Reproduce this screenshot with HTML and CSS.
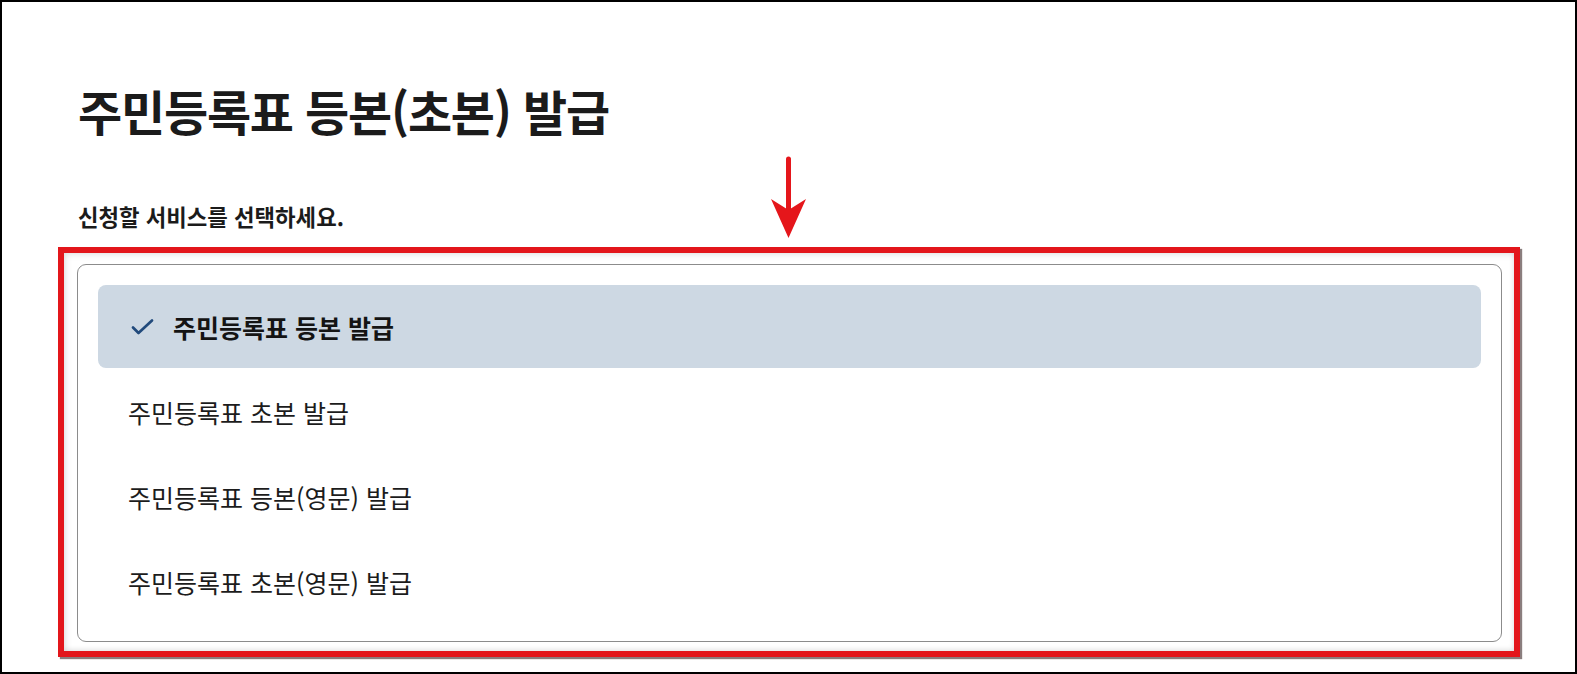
FILE: index.html
```html
<!DOCTYPE html>
<html lang="ko">
<head>
<meta charset="utf-8">
<title>주민등록표 등본(초본) 발급</title>
<link rel="stylesheet" href="styles.css">
</head>
<body>
<div class="frame">
  <h1 class="title">주민등록표 등본(초본) 발급</h1>
  <p class="subtitle">신청할 서비스를 선택하세요.</p>
  <div class="highlight">
    <ul class="card">
      <li class="item item-selected">
        <svg class="check" width="26" height="20" viewBox="0 0 26 20" aria-hidden="true">
          <path d="M5 10.5 L10.5 16 L24 3.5" fill="none" stroke="#214a7c" stroke-width="2.7" stroke-linecap="round" stroke-linejoin="round"/>
        </svg>
        <span>주민등록표 등본 발급</span>
      </li>
      <li class="item">주민등록표 초본 발급</li>
      <li class="item">주민등록표 등본(영문) 발급</li>
      <li class="item">주민등록표 초본(영문) 발급</li>
    </ul>
  </div>
  <svg class="arrow" width="46" height="92" viewBox="0 0 46 92" aria-hidden="true">
    <line x1="22.5" y1="9" x2="22.5" y2="60" stroke="#e5161b" stroke-width="5" stroke-linecap="round"/>
    <polygon points="5,49 22.5,60 40,49 22.5,88" fill="#e5161b"/>
  </svg>
</div>
</body>
</html>
```

FILE: styles.css
```css
* {
  box-sizing: border-box;
}

html, body {
  margin: 0;
  padding: 0;
  background: #ffffff;
}

.frame {
  position: relative;
  width: 1577px;
  height: 674px;
  border: 2px solid #000000;
  padding: 78px 55px 0 56px;
  overflow: hidden;
  font-family: "Noto Sans CJK KR", "Noto Sans", sans-serif;
  color: #1d1d1d;
}

.title {
  margin: 0;
  padding-left: 20px;
  font-size: 48px;
  line-height: 60px;
  font-weight: 700;
  letter-spacing: -1.2px;
  color: #1b1b1b;
}

.subtitle {
  margin: 61px 0 0;
  padding-left: 20px;
  font-size: 22.3px;
  line-height: 30px;
  font-weight: 700;
  color: #1b1b1b;
}

.highlight {
  margin-top: 16px;
  width: 1462px;
  border: 6px solid #e3161b;
  padding: 11px 12px 9px 13px;
  box-shadow: 2px 2px 1px rgba(60, 40, 40, 0.6), inset 2px 2px 6px rgba(0, 0, 0, 0.10), inset -1px -2px 5px rgba(0, 0, 0, 0.08);
}

.card {
  list-style: none;
  margin: 0;
  padding: 20px 20px 18px;
  border: 1px solid #8c8c8c;
  border-radius: 9px;
  background: #ffffff;
  display: flex;
  flex-direction: column;
  gap: 2px;
}

.item {
  height: 83px;
  display: flex;
  align-items: center;
  padding-left: 30px;
  font-size: 25px;
  color: #1c1c1c;
  border-radius: 8px;
}

.item-selected {
  background: #cdd8e3;
  font-weight: 700;
  color: #141414;
  gap: 19px;
}

.check {
  flex: none;
  display: block;
}

.arrow {
  position: absolute;
  left: 764px;
  top: 148px;
}
```
